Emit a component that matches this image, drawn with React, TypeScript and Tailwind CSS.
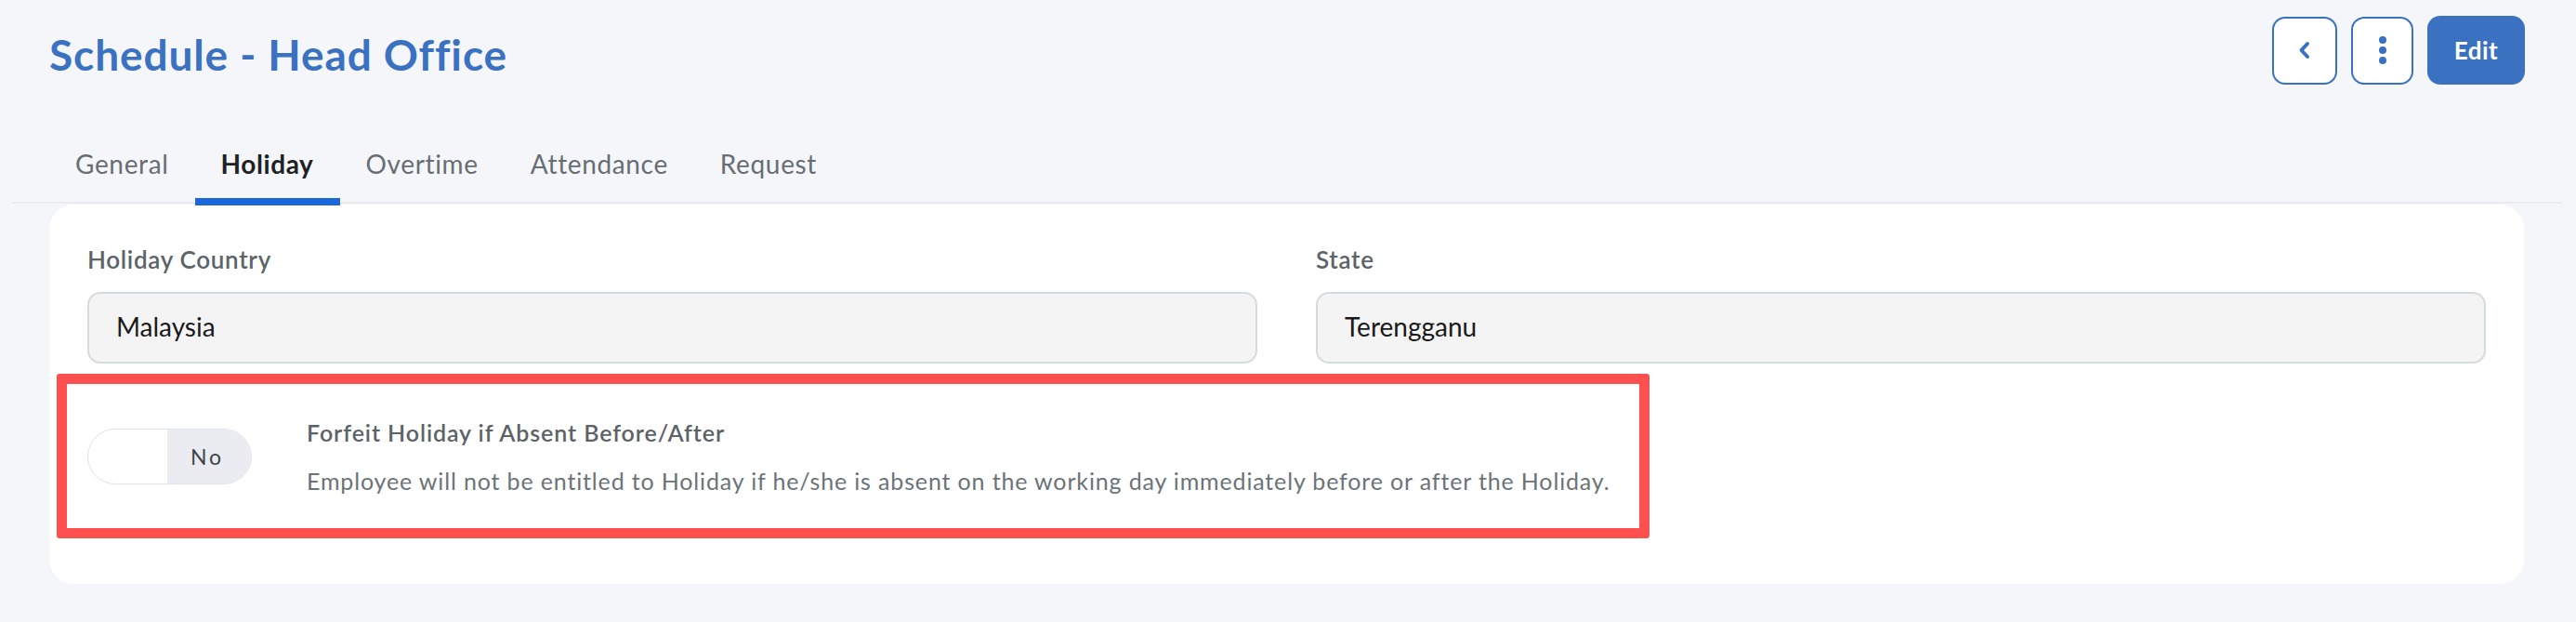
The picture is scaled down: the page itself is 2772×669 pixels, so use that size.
import React from "react";

const tabs = ["General", "Holiday", "Overtime", "Attendance", "Request"];

export default function App() {
  return (
    <div
      className="min-h-screen w-full bg-[#f5f6fa] pb-[42px]"
      style={{ fontFamily: "Lato, 'Open Sans', sans-serif" }}
    >
      {/* Header */}
      <div className="flex items-start justify-between pl-[53px] pr-[55px] pt-[17px]">
        <h1 className="mt-[14px] text-[46px] font-bold leading-[1.2] tracking-[0.9px] text-[#3a71c1]">
          Schedule - Head Office
        </h1>
        <div className="flex items-center gap-[15px]">
          <button className="flex h-[73px] w-[70px] items-center justify-center rounded-[14px] border-2 border-[#3a71c1] bg-white">
            <svg width="16" height="20" viewBox="0 0 16 20" fill="none">
              <path
                d="M11 3 L4.5 10 L11 17"
                stroke="#3a71c1"
                strokeWidth="4"
                strokeLinecap="round"
                strokeLinejoin="round"
              />
            </svg>
          </button>
          <button className="flex h-[73px] w-[67px] items-center justify-center rounded-[14px] border-2 border-[#3a71c1] bg-white">
            <svg width="10" height="30" viewBox="0 0 10 30" fill="#3a71c1">
              <circle cx="5" cy="4" r="4" />
              <circle cx="5" cy="15" r="4" />
              <circle cx="5" cy="26" r="4" />
            </svg>
          </button>
          <button className="flex h-[74px] w-[105px] items-center justify-center rounded-[14px] bg-[#3a71c1] text-[26px] font-bold tracking-[0.5px] text-white">
            Edit
          </button>
        </div>
      </div>

      {/* Tabs */}
      <div className="mx-[13px] mr-[15px] mt-[69px] flex border-b-2 border-[#ebecee] pl-[40px]">
        {tabs.map((t) => {
          const active = t === "Holiday";
          return (
            <div
              key={t}
              className={
                active
                  ? "relative px-[28px] pb-[23px] text-[28px] font-bold leading-[1.2] tracking-[0.6px] text-[#1f2224]"
                  : "relative px-[28px] pb-[23px] text-[28px] font-normal leading-[1.2] tracking-[0.65px] text-[#676e73]"
              }
            >
              {t}
              {active && (
                <span className="absolute bottom-[-4px] left-0 right-0 h-[8px] bg-[#1a66db]" />
              )}
            </div>
          );
        })}
      </div>

      {/* Card */}
      <div className="mx-[53px] mt-[1px] w-[2663px] rounded-[26px] bg-white px-[41px] pb-[59px] pt-[44px]">
        <div className="grid grid-cols-2 gap-x-[63px]">
          <div>
            <div className="text-[26px] font-semibold leading-[1.2] tracking-[0.7px] text-[#5c6469]">
              Holiday Country
            </div>
            <div className="mt-[19px] flex h-[77px] items-center rounded-[14px] border-2 border-[#d5dcdf] bg-[#f4f4f4] px-[29px] text-[28px] leading-[1.2] text-[#1a1a1a]">
              Malaysia
            </div>
          </div>
          <div>
            <div className="text-[26px] font-semibold leading-[1.2] tracking-[0.7px] text-[#5c6469]">
              State
            </div>
            <div className="mt-[19px] flex h-[77px] items-center rounded-[14px] border-2 border-[#d5dcdf] bg-[#f4f4f4] px-[29px] text-[28px] leading-[1.2] text-[#1a1a1a]">
              Terengganu
            </div>
          </div>
        </div>

        {/* Toggle row */}
        <div className="relative mt-[22px] flex h-[156px] items-center">
          <div className="flex h-[60px] w-[177px] overflow-hidden rounded-full border border-[#e1e3ea] bg-white">
            <div className="w-[85px]" />
            <div className="flex flex-1 items-center justify-center bg-[#ebecf2] pr-[4px] text-[23px] tracking-[3px] text-[#3f4448]">
              No
            </div>
          </div>
          <div className="ml-[59px]">
            <div className="text-[25px] font-semibold leading-[1.2] tracking-[0.9px] text-[#5c6368]">
              Forfeit Holiday if Absent Before/After
            </div>
            <div className="mt-[22px] text-[25px] leading-[1.2] tracking-[0.85px] text-[#6b7378]">
              Employee will not be entitled to Holiday if he/she is absent on the working day immediately before or after the Holiday.
            </div>
          </div>
          <div className="pointer-events-none absolute left-[-33px] top-[-11px] h-[177px] w-[1714px] rounded-[3px] border-[11px] border-[#ff4f4f]" />
        </div>
      </div>
    </div>
  );
}
